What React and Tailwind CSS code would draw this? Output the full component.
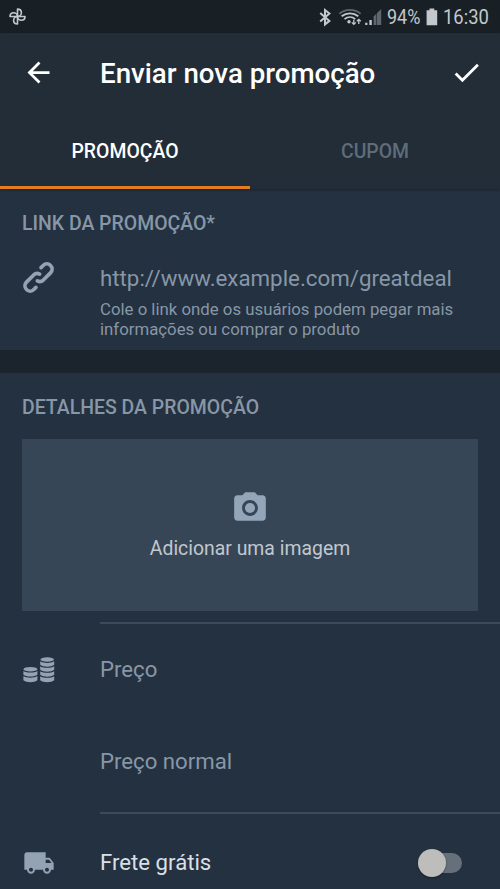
import React, { useState } from 'react'

function FanIcon(){
  return (
    <svg width="17" height="17" viewBox="0 0 17 17" fill="none" stroke="#c3c8cc" strokeWidth="1.6" strokeLinejoin="round">
      <path d="M8.5 8.5V1.1C11.2 1.1 12.4 3 12.4 4.7C12.4 6.6 10.8 8.5 8.5 8.5Z" />
      <path d="M8.5 8.5H16C16 11.2 14 12.3 12.4 12.3C10.4 12.3 8.5 10.8 8.5 8.5Z" />
      <path d="M8.5 8.5V16C5.8 16 4.6 14 4.6 12.3C4.6 10.4 6.2 8.5 8.5 8.5Z" />
      <path d="M8.5 8.5H1C1 5.8 3 4.7 4.6 4.7C6.6 4.7 8.5 6.2 8.5 8.5Z" />
    </svg>
  )
}

function StatusIcons(){
  return (
    <svg width="64" height="20" viewBox="0 0 64 20" fill="none" stroke="#c3c8cc">
      <path d="M2.2 6L11.4 13.9L7 17.4V3L11.4 6.5L2.2 14.4" strokeWidth="2" />
      <path d="M21.4 6.7C27.5 1.7 36.5 1.7 42.6 6.7" stroke="#5e676d" strokeWidth="1.8" />
      <path d="M23.6 9.3C28.6 5.3 35.4 5.3 40.3 9.3" strokeWidth="1.8" />
      <path d="M26.5 12.2C29.8 9.5 34.2 9.5 37.2 12.2" strokeWidth="1.7" />
      <circle cx="31" cy="14.8" r="1.7" fill="#c3c8cc" stroke="none" />
      <g strokeWidth="1.3">
        <path d="M35.8 12.8V17.3M33.8 15.4L35.8 17.4L37.8 15.4" />
        <path d="M40.8 17V12.4M38.8 14.3L40.8 12.3L42.8 14.3" />
      </g>
      <g stroke="none">
        <rect x="47.2" y="15.7" width="2.2" height="2.3" fill="#c3c8cc" />
        <rect x="51.4" y="13" width="2.4" height="5" fill="#c3c8cc" />
        <path d="M55.6 9.4L58.4 6.7V18H55.6Z" fill="#5e676d" />
        <path d="M59 6.1L63.2 2V18H59Z" fill="#5e676d" />
      </g>
    </svg>
  )
}

function BatteryIcon(){
  return (
    <svg width="12" height="18" viewBox="0 0 12 18" fill="#c3c8cc">
      <path d="M3.5 0.5H8.3V2.3H11.2V17.2H0.6V2.3H3.5Z" />
    </svg>
  )
}

function LinkIcon(){
  return (
    <svg width="33" height="33" viewBox="-16.5 -16.5 33 33" fill="none" stroke="#93a3b4" strokeWidth="3.7" strokeLinecap="round">
      <g transform="rotate(-45)">
        <path d="M8.8 -5.2H11.8A5.2 5.2 0 0 1 11.8 5.2H1.6A5.2 5.2 0 0 1 -3.2 1.6" />
        <path d="M-8.8 5.2H-11.8A5.2 5.2 0 0 1 -11.8 -5.2H-1.6A5.2 5.2 0 0 1 3.2 -1.6" />
      </g>
    </svg>
  )
}

function CameraIcon(){
  return (
    <svg width="38" height="38" viewBox="0 0 24 24" fill="#93a5b8">
      <circle cx="12" cy="12" r="3.2" />
      <path d="M9 2L7.17 4H4c-1.1 0-2 .9-2 2v12c0 1.1.9 2 2 2h16c1.1 0 2-.9 2-2V6c0-1.1-.9-2-2-2h-3.17L15 2H9zm3 15c-2.76 0-5-2.24-5-5s2.24-5 5-5 5 2.24 5 5-2.24 5-5 5z" />
    </svg>
  )
}

function CoinsIcon(){
  return (
    <svg width="32" height="26" viewBox="0 0 32 26" fill="#93a3b4">
      <ellipse cx="7.4" cy="12.2" rx="6.8" ry="2.3" />
      <path d="M0.4 13.9C3.5 16.1 11.3 16.1 14.4 13.9V17.8C11.8 20.2 3 20.2 0.4 17.8Z" />
      <path d="M0.4 19.1C3.5 21.4 11.3 21.4 14.4 19.1V23.2C11.8 25.8 3 25.8 0.4 23.2Z" />
      <ellipse cx="24.2" cy="2.5" rx="6.8" ry="2.2" />
      <path d="M17.2 4.3C20.3 6.4 28.1 6.4 31.2 4.3V7.8C28.6 10.3 19.8 10.3 17.2 7.8Z" />
      <path d="M17.2 9.2C20.3 11.4 28.1 11.4 31.2 9.2V12.8C28.6 15.3 19.8 15.3 17.2 12.8Z" />
      <path d="M17.2 14.2C20.3 16.4 28.1 16.4 31.2 14.2V17.8C28.6 20.3 19.8 20.3 17.2 17.8Z" />
      <path d="M17.2 19.2C20.3 21.4 28.1 21.4 31.2 19.2V23.2C28.6 25.8 19.8 25.8 17.2 23.2Z" />
    </svg>
  )
}

function TruckIcon(){
  return (
    <svg width="32" height="32" viewBox="0 0 24 24" fill="#93a3b4">
      <path d="M20 8h-3V4H3c-1.1 0-2 .9-2 2v11h2c0 1.66 1.34 3 3 3s3-1.34 3-3h6c0 1.66 1.34 3 3 3s3-1.34 3-3h2v-5l-3-4zM6 18.5c-.83 0-1.5-.67-1.5-1.5s.67-1.5 1.5-1.5 1.5.67 1.5 1.5-.67 1.5-1.5 1.5zm13.5-9l1.96 2.5H17V9.5h2.5zm-1.5 9c-.83 0-1.5-.67-1.5-1.5s.67-1.5 1.5-1.5 1.5.67 1.5 1.5-.67 1.5-1.5 1.5z" />
    </svg>
  )
}

function StatusBar(){
  return (
    <div className="flex h-[33px] shrink-0 items-center bg-[#182026] pl-[9px] pr-[11px] text-[19.8px] text-[#c3c8cc]">
      <FanIcon />
      <div className="ml-auto flex items-center">
        <StatusIcons />
        <span className="ml-[5px] w-[33px] origin-left scale-x-[0.91] whitespace-nowrap pt-[3px]">94%</span>
        <span className="ml-[6px]"><BatteryIcon /></span>
        <span className="ml-[5px] w-[46px] origin-left scale-x-[0.93] whitespace-nowrap pt-[3px]">16:30</span>
      </div>
    </div>
  )
}

function Tab({ active, onClick, children }){
  return (
    <button
      onClick={onClick}
      className={`h-[78px] w-1/2 border-b-[3px] pt-[6px] text-[19.4px] font-medium ${active ? 'border-[#e67c20] text-white' : 'border-transparent text-[#5f6c79]'}`}
    >
      {children}
    </button>
  )
}

export default function App(){
  const [tab, setTab] = useState('promo')
  const [freeShipping, setFreeShipping] = useState(false)

  return (
    <div className="flex h-[889px] w-[500px] flex-col overflow-hidden bg-[#243140] font-['Roboto',sans-serif] text-[#8797a7]">
      <StatusBar />

      <header className="shrink-0 bg-[#222d38] shadow-[0_1px_3px_rgba(0,0,0,0.3)]">
        <div className="flex h-[78px] items-center pl-[22px] pr-[17px]">
          <svg width="33" height="33" viewBox="0 0 24 24" fill="#fff">
            <path d="M20 11H7.83l5.59-5.59L12 4l-8 8 8 8 1.41-1.41L7.83 13H20v-2z" />
          </svg>
          <h1 className="ml-[45px] pt-[3px] text-[27.7px] font-medium text-white">Enviar nova promoção</h1>
          <svg className="ml-auto" width="33" height="33" viewBox="0 0 24 24" fill="#fff">
            <path d="M9 16.17L4.83 12l-1.42 1.41L9 19 21 7l-1.41-1.41z" />
          </svg>
        </div>
        <nav className="flex">
          <Tab active={tab === 'promo'} onClick={() => setTab('promo')}>PROMOÇÃO</Tab>
          <Tab active={tab === 'coupon'} onClick={() => setTab('coupon')}>CUPOM</Tab>
        </nav>
      </header>

      <section className="h-[161px] shrink-0 px-[22px] pt-[23px]">
        <h2 className="text-[19.45px] leading-[24px] font-medium">LINK DA PROMOÇÃO*</h2>
        <div className="mt-[25px] flex">
          <LinkIcon />
          <div className="ml-[45px]">
            <p className="text-[22.3px] leading-[34px]">http://www.example.com/greatdeal</p>
            <p className="mt-[5px] text-[16.8px] leading-[19.5px]">
              Cole o link onde os usuários podem pegar mais<br />
              informações ou comprar o produto
            </p>
          </div>
        </div>
      </section>

      <div className="h-[23px] shrink-0 bg-[#1b242c]" />

      <section className="flex-1">
        <div className="px-[22px] pt-[23px]">
          <h2 className="text-[19.45px] leading-[24px] font-medium">DETALHES DA PROMOÇÃO</h2>
          <button className="mt-[19px] flex h-[172px] w-full flex-col items-center bg-[#374656] pt-[50px] text-[19.4px] leading-[24px] text-[#c0c8d0]">
            <CameraIcon />
            <span className="mt-[10px]">Adicionar uma imagem</span>
          </button>
        </div>

        <div className="mt-[11px] ml-[100px] h-0.5 bg-[#3d4a59]" />

        <div className="flex h-[92px] items-center pl-[23px]">
          <CoinsIcon />
          <span className="ml-[45px] pb-px text-[22.2px]">Preço</span>
        </div>
        <div className="flex h-[92px] items-center pl-[100px]">
          <span className="pb-px text-[22.2px]">Preço normal</span>
        </div>

        <div className="mt-[4px] ml-[100px] h-0.5 bg-[#3d4a59]" />

        <div className="flex h-[97px] items-center pl-[23px] pr-[38px] text-[#d9e0e6]">
          <TruckIcon />
          <span className="ml-[45px] pt-px text-[22.2px]">Frete grátis</span>
          <button
            role="switch"
            aria-checked={freeShipping}
            aria-label="Frete grátis"
            onClick={() => setFreeShipping(!freeShipping)}
            className={`ml-auto flex h-5 w-[44px] items-center rounded-full bg-[#66707b] ${freeShipping ? 'justify-end' : 'justify-start'}`}
          >
            <span className="h-7 w-7 shrink-0 rounded-full bg-[#bdbdbb] shadow-[0_1px_2px_rgba(0,0,0,0.4)]" />
          </button>
        </div>
      </section>
    </div>
  )
}
